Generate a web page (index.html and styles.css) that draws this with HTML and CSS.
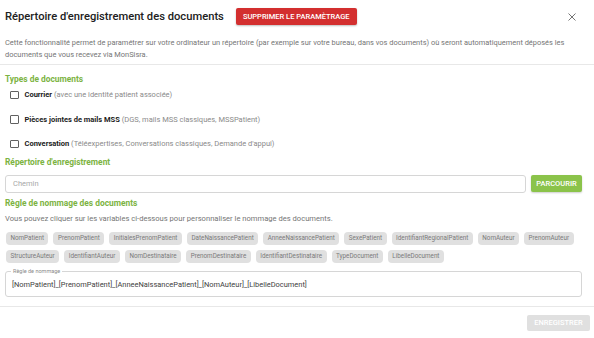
FILE: index.html
```html
<!DOCTYPE html>
<html lang="fr">
<head>
<meta charset="utf-8">
<title>Répertoire d'enregistrement des documents</title>
<link rel="stylesheet" href="styles.css">
</head>
<body>
<div class="dialog">
  <div class="header">
    <h1 class="title">Répertoire d'enregistrement des documents</h1>
    <button class="btn-danger">SUPPRIMER LE PARAMÈTRAGE</button>
    <span class="close" aria-label="Fermer">
      <svg width="8" height="8" viewBox="0 0 8 8"><path d="M0.5 0.5L7.5 7.5M7.5 0.5L0.5 7.5" stroke="#757575" stroke-width="1" fill="none"/></svg>
    </span>
  </div>
  <p class="intro">Cette fonctionnalité permet de paramétrer sur votre ordinateur un répertoire (par exemple sur votre bureau, dans vos documents) où seront automatiquement déposés les documents que vous recevez via MonSisra.</p>
  <div class="divider"></div>
  <div class="content">
    <h2 class="section-title">Types de documents</h2>
    <div class="checks">
      <label class="check-row"><span class="box"></span><b>Courrier</b>&nbsp;<span class="muted">(avec une identité patient associée)</span></label>
      <label class="check-row"><span class="box"></span><b>Pièces jointes de mails MSS</b>&nbsp;<span class="muted">(DGS, mails MSS classiques, MSSPatient)</span></label>
      <label class="check-row"><span class="box"></span><b>Conversation</b>&nbsp;<span class="muted">(Téléexpertises, Conversations classiques, Demande d'appui)</span></label>
    </div>

    <h2 class="section-title s2">Répertoire d'enregistrement</h2>
    <div class="path-row">
      <div class="input">Chemin</div>
      <button class="btn-green">PARCOURIR</button>
    </div>

    <h2 class="section-title s3">Règle de nommage des documents</h2>
    <p class="hint">Vous pouvez cliquer sur les variables ci-dessous pour personnaliser le nommage des documents.</p>
    <div class="chips">
      <span class="chip">NomPatient</span>
      <span class="chip">PrenomPatient</span>
      <span class="chip">InitialesPrenomPatient</span>
      <span class="chip">DateNaissancePatient</span>
      <span class="chip">AnneeNaissancePatient</span>
      <span class="chip">SexePatient</span>
      <span class="chip">IdentifiantRegionalPatient</span>
      <span class="chip">NomAuteur</span>
      <span class="chip">PrenomAuteur</span>
      <span class="chip">StructureAuteur</span>
      <span class="chip">IdentifiantAuteur</span>
      <span class="chip">NomDestinataire</span>
      <span class="chip">PrenomDestinataire</span>
      <span class="chip">IdentifiantDestinataire</span>
      <span class="chip">TypeDocument</span>
      <span class="chip">LibelleDocument</span>
    </div>
    <div class="field">
      <span class="legend">Règle de nommage</span>
      <div class="field-value">[NomPatient]_[PrenomPatient]_[AnneeNaissancePatient]_[NomAuteur]_[LibelleDocument]</div>
    </div>
  </div>
  <div class="divider footer-div"></div>
  <div class="footer">
    <button class="btn-disabled">ENREGISTRER</button>
  </div>
</div>
</body>
</html>
```

FILE: styles.css
```css
* { box-sizing: border-box; }
html, body { margin: 0; padding: 0; background: #fff; }
body { font-family: Roboto, "Liberation Sans", sans-serif; color: #212121; }

.dialog { width: 594px; }

.header {
  display: flex;
  align-items: center;
  height: 33px;
  padding: 0 12px 0 5px;
}
.title {
  margin: 0;
  font-size: 11.2px;
  font-weight: 500;
  color: #212121;
}
.btn-danger {
  margin-left: 12px;
  height: 17px;
  padding: 0 7px;
  border: 0;
  border-radius: 2px;
  background: #d32f2f;
  color: #fff;
  font-family: inherit;
  font-size: 7.5px;
  font-weight: 500;
  box-shadow: 0 1px 2px rgba(0,0,0,.25);
}
.close {
  margin-left: auto;
  margin-right: 6px;
  display: flex;
}

.intro {
  margin: 4px 12px 3px 5px;
  font-size: 7.45px;
  line-height: 12px;
  color: #757575;
}
.divider { height: 1px; background: #e8e8e8; }

.content { padding: 9px 12px 0 5px; }

.section-title {
  margin: 0;
  font-size: 8.4px;
  line-height: 11px;
  font-weight: 700;
  color: #7cb342;
}
.s2 { margin-top: 1px; }
.s3 { margin-top: 5.5px; }

.checks { margin-top: -2.5px; }
.check-row {
  display: flex;
  align-items: center;
  height: 24.5px;
  font-size: 7.5px;
  padding-left: 5px;
}
.check-row b { font-weight: 700; color: #212121; }
.box {
  width: 8.5px;
  height: 8.5px;
  border: 1.2px solid #616161;
  border-radius: 1px;
  margin-right: 6px;
}
.muted { color: #8a8a8a; }

.path-row {
  display: flex;
  align-items: center;
  gap: 5px;
  margin-top: 6.5px;
}
.input {
  flex: 1;
  height: 18px;
  border: 1px solid #d6d6d6;
  border-radius: 3px;
  padding-left: 7px;
  font-size: 7.5px;
  line-height: 16px;
  color: #a8a8a8;
}
.btn-green {
  width: 51px;
  height: 17px;
  border: 0;
  border-radius: 2px;
  background: #8bc34a;
  color: #fff;
  font-family: inherit;
  font-size: 7.5px;
  font-weight: 500;
  padding: 0;
  box-shadow: 0 1px 2px rgba(0,0,0,.2);
}

.hint {
  margin: 3.5px 0 0;
  font-size: 7.6px;
  line-height: 12px;
  color: #757575;
}

.chips {
  display: flex;
  flex-wrap: wrap;
  gap: 5px 5px;
  margin-top: 7px;
  padding-left: 1px;
}
.chip {
  height: 13px;
  line-height: 13px;
  padding: 0 4.5px;
  border-radius: 4px;
  background: #e0e0e0;
  color: #7a7a7a;
  font-size: 6.3px;
}

.field {
  position: relative;
  margin-top: 8px;
  height: 26px;
  border: 1px solid #d6d6d6;
  border-radius: 3px;
  padding-left: 6px;
  display: flex;
  align-items: center;
}
.legend {
  position: absolute;
  top: -4px;
  left: 5px;
  padding: 0 2px;
  background: #fff;
  font-size: 5.5px;
  line-height: 7px;
  color: #8a8a8a;
}
.field-value {
  font-size: 7.45px;
  color: #424242;
  padding-top: 1px;
}

.footer-div { margin-top: 9px; }
.footer {
  display: flex;
  justify-content: flex-end;
  padding: 8px 4px 0 0;
}
.btn-disabled {
  width: 63px;
  height: 16px;
  border: 0;
  border-radius: 2px;
  background: #e0e0e0;
  color: #fff;
  font-family: inherit;
  font-size: 7.5px;
  font-weight: 500;
  padding: 0;
}
```
